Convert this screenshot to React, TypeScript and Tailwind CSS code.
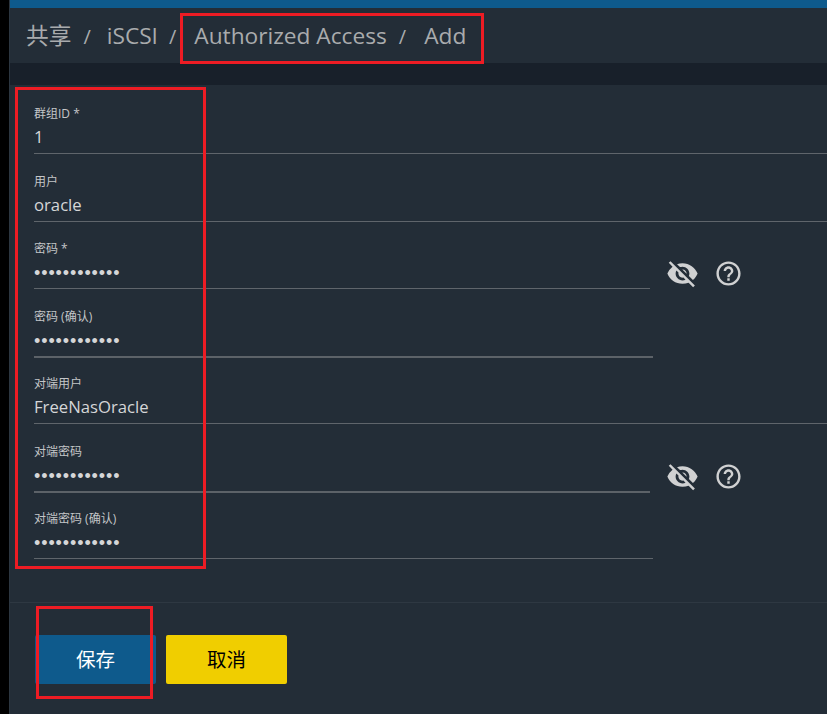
import { MdHelpOutline, MdVisibilityOff } from 'react-icons/md'

const DOTS = '••••••••••••'

interface FieldProps {
  label: string
  value: string
  lineWidth?: string
  thick?: boolean
  icons?: boolean
}

function Field({ label, value, lineWidth = 'w-full', thick = false, icons = false }: FieldProps) {
  const isSecret = value === DOTS
  return (
    <div className="relative h-[67.5px] pt-[18px]">
      <div className="h-[20px] text-[12px] leading-[20px] text-[#c4c6c8]">{label}</div>
      <div
        className={
          isSecret
            ? 'h-[29px] text-[18px] leading-[29px] text-[#d5d6d7] font-["Liberation_Sans",sans-serif] tracking-[0.9px]'
            : 'h-[29px] text-[16.7px] leading-[25px] text-[#d5d6d7]'
        }
      >
        {value}
      </div>
      <div className={`${lineWidth} ${thick ? 'h-[2px] bg-[#5c6268]' : 'h-px bg-[#5f656b]'}`} />
      {icons && (
        <div className="absolute left-[632px] top-[36px] flex items-center gap-[15px] text-[#d0d1d2]">
          <MdVisibilityOff size={33} />
          <MdHelpOutline size={29} />
        </div>
      )}
    </div>
  )
}

export default function App() {
  return (
    <div className='relative flex h-[714px] w-[827px] overflow-hidden bg-[#232d37] font-["Open_Sans","Noto_Sans_CJK_SC",sans-serif]'>
      <div className="w-[10px] shrink-0 border-r border-[#2c3640] bg-black" />
      <div className="flex min-w-0 flex-1 flex-col">
        <div className="h-[8px] bg-[#0e5a8c]" />
        <div className="flex h-[55px] items-center pt-[2px] pl-[16px] text-[22.7px] text-[#a9abad]">
          <span>共享</span>
          <span className="ml-[12px] mr-[16px] text-[20px]">/</span>
          <span>iSCSI</span>
          <span className="ml-[11px] mr-[18px] text-[20px]">/</span>
          <span>Authorized Access</span>
          <span className="ml-[12px] mr-[18px] text-[20px]">/</span>
          <span>Add</span>
        </div>
        <div className="h-[22px] bg-[#18202a]" />
        <div className="flex-1 pt-[1px] pl-[24px]">
          <Field label="群组ID *" value="1" />
          <Field label="用户" value="oracle" />
          <Field label="密码 *" value={DOTS} lineWidth="w-[616px]" icons />
          <Field label="密码 (确认)" value={DOTS} lineWidth="w-[619px]" thick />
          <Field label="对端用户" value="FreeNasOracle" />
          <Field label="对端密码" value={DOTS} lineWidth="w-[616px]" thick icons />
          <Field label="对端密码 (确认)" value={DOTS} lineWidth="w-[619px]" />
        </div>
        <div className="h-[112px] border-t border-[#2e3842] pt-[32px] pl-[25px]">
          <div className="flex gap-[10px]">
            <button className="h-[49px] w-[121px] rounded-[2px] bg-[#0e5a8c] text-[19.5px] text-white">保存</button>
            <button className="h-[49px] w-[121px] rounded-[2px] bg-[#f0ce00] text-[19.5px] text-black">取消</button>
          </div>
        </div>
      </div>

      {/* red annotation boxes drawn on top of the screenshot */}
      <div className="absolute left-[180px] top-[13px] h-[51px] w-[304px] border-[3px] border-[#ed1c24]" />
      <div className="absolute left-[15px] top-[87px] h-[482px] w-[191px] border-[3px] border-[#ed1c24]" />
      <div className="absolute left-[36px] top-[606px] h-[93px] w-[117px] border-[3px] border-[#ed1c24]" />
    </div>
  )
}
